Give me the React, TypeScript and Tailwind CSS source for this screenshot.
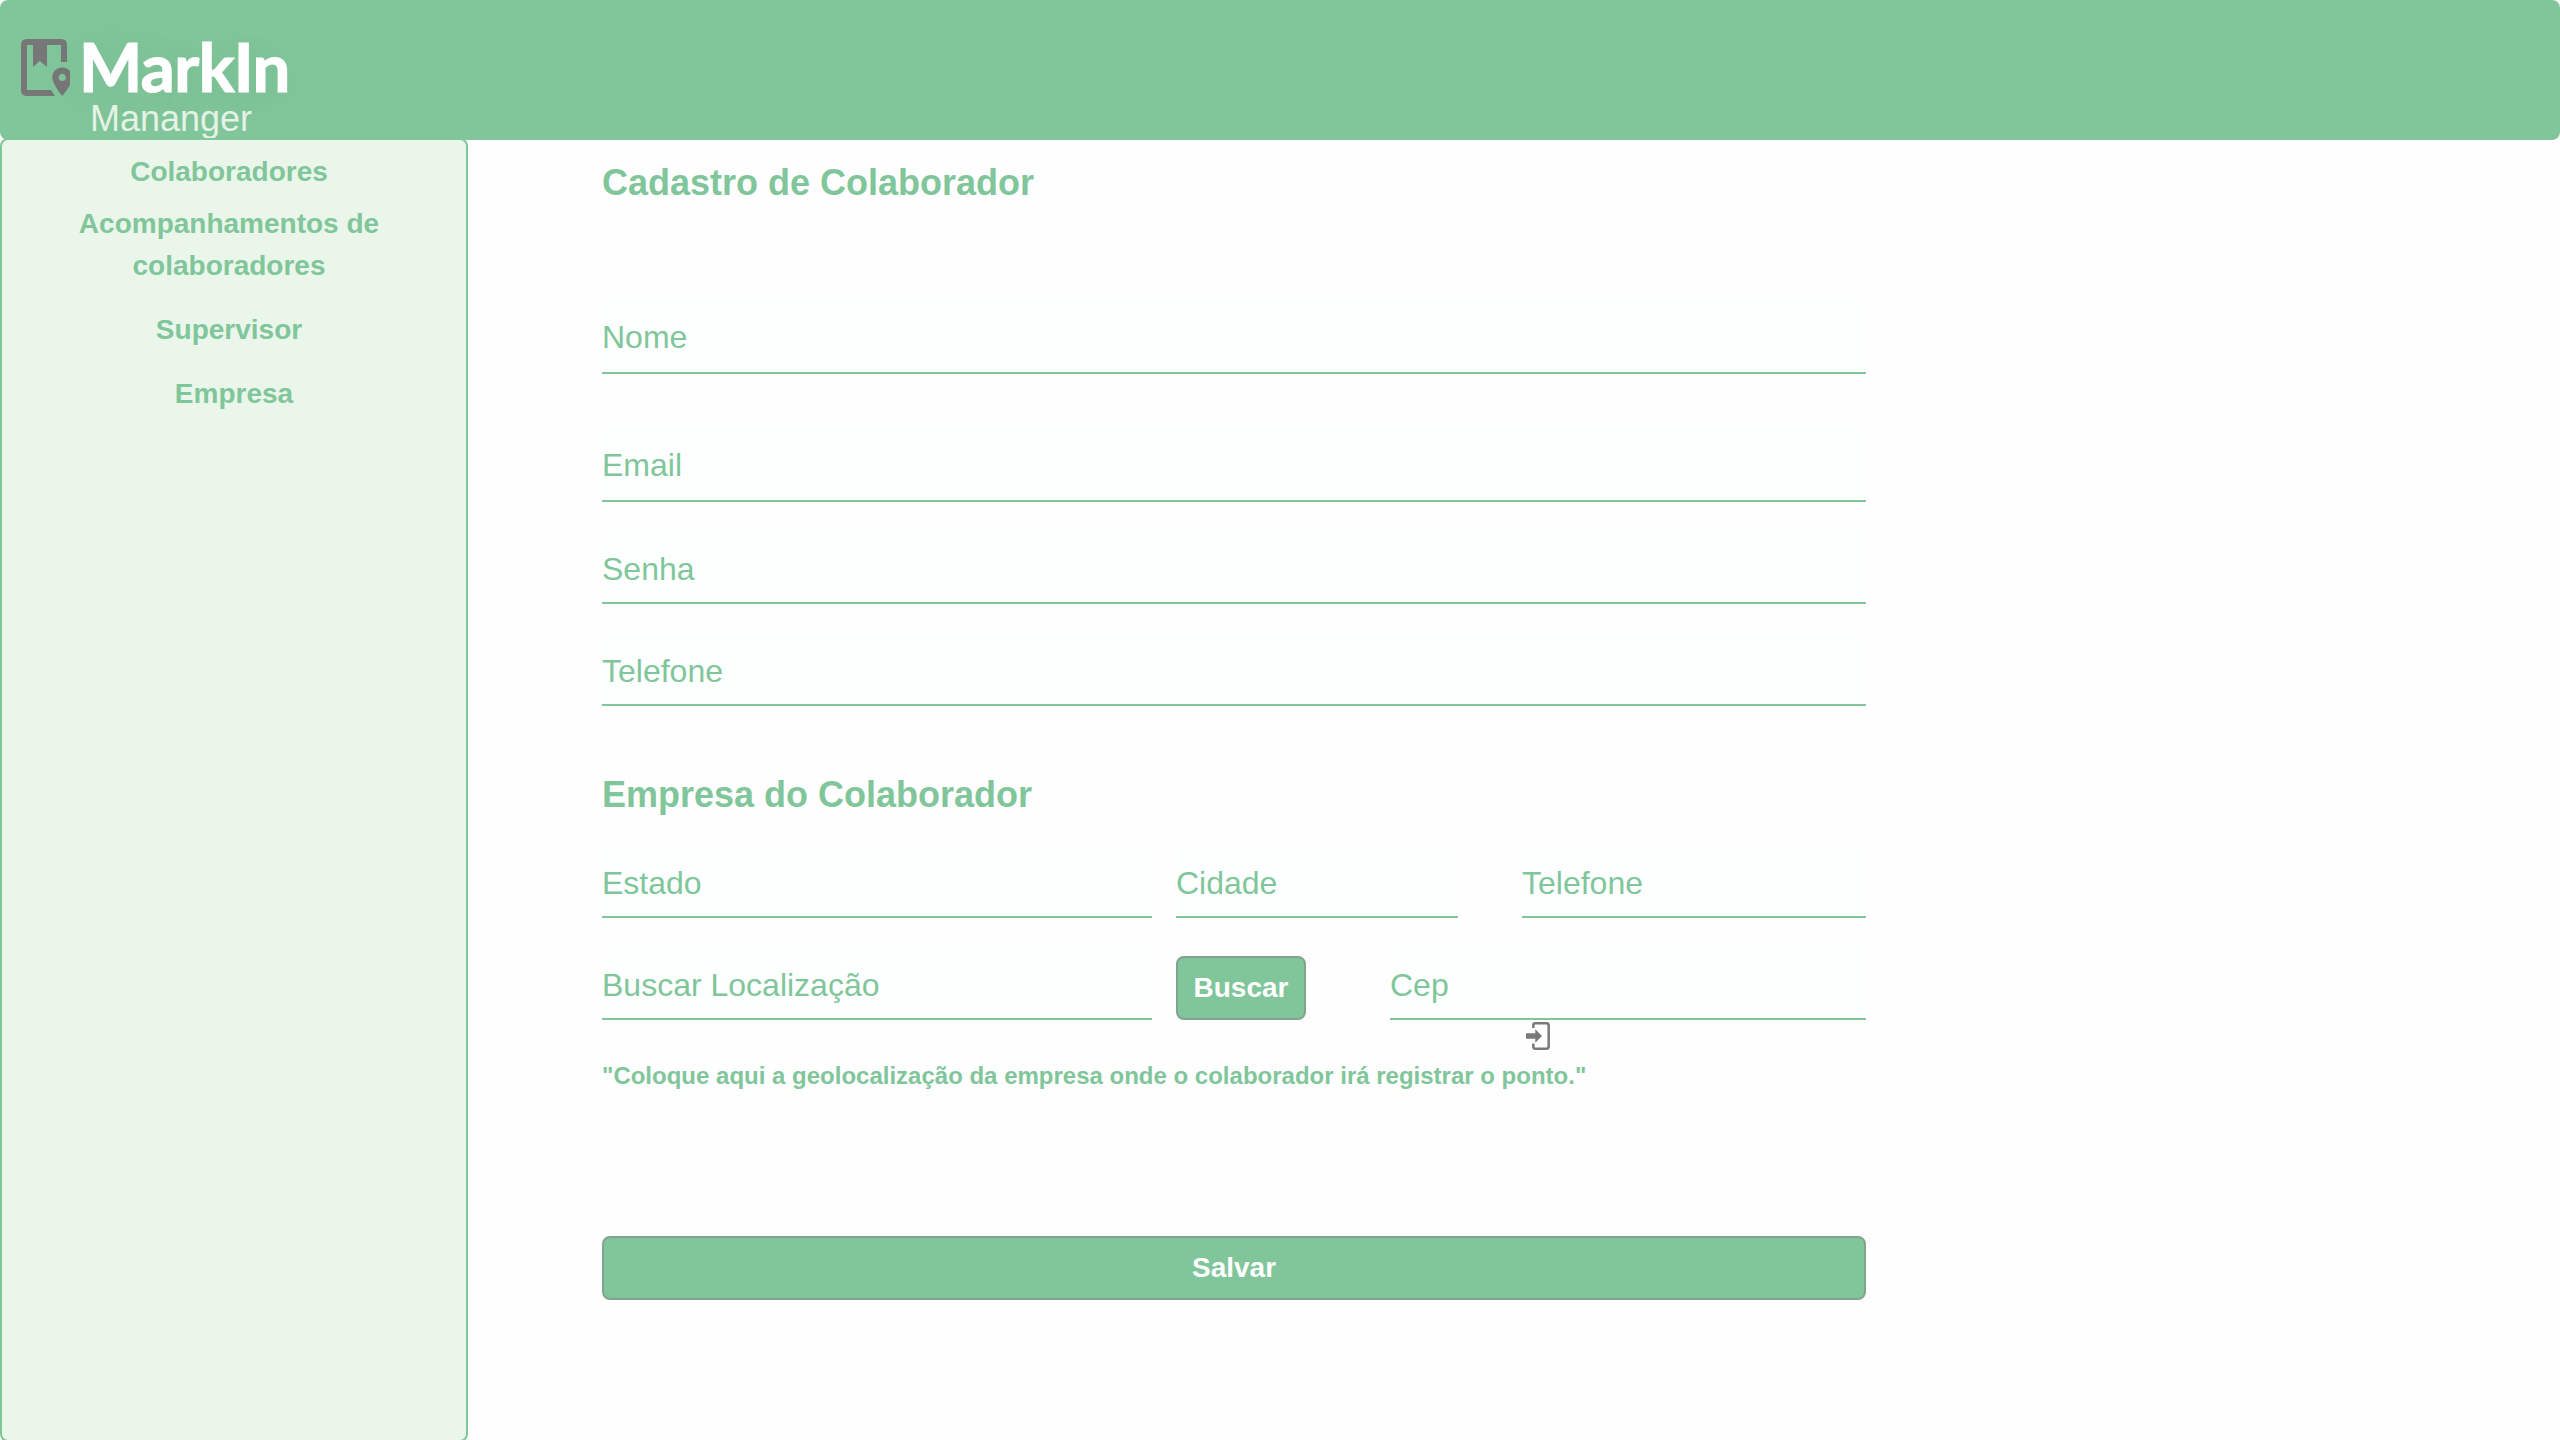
import React from "react";

type FieldProps = { label: string; type?: string; className: string };

function Field({ label, type = "text", className }: FieldProps) {
  return (
    <input
      type={type}
      placeholder={label}
      aria-label={label}
      className={`block shrink-0 rounded-none border-0 border-b-2 border-[#80c69a] bg-[#fdfffe] p-0 text-[32px] text-[#80c69a] outline-none placeholder:text-[#80c69a] placeholder:opacity-100 ${className}`}
    />
  );
}

function LogoIcon() {
  return (
    <svg width="49" height="57" viewBox="21 39 49 57" fill="#777777" className="block shrink-0">
      <path d="M27 39H61Q67 39 67 45V62H61V45H47V67L39.7 61L33 67V45H27V90H51L55 96H27Q21 96 21 90V45Q21 39 27 39Z" />
      <path
        fillRule="evenodd"
        d="M62.3 67.5C57 67.5 52.3 71.6 52.3 77.3C52.3 84.5 62.3 96 62.3 96S72.3 84.5 72.3 77.3C72.3 71.6 67.6 67.5 62.3 67.5ZM62.3 74A3.5 3.5 0 1 1 62.3 81A3.5 3.5 0 1 1 62.3 74Z"
      />
    </svg>
  );
}

function EnterIcon() {
  return (
    <svg width="24" height="28" viewBox="0 0 24 28" className="block">
      <path d="M7.3 6V3.5Q7.3 1.3 9.5 1.3H20.5Q22.7 1.3 22.7 3.5V24.5Q22.7 26.7 20.5 26.7H9.5Q7.3 26.7 7.3 24.5V21.5" fill="none" stroke="#797979" strokeWidth="2.5" />
      <path d="M0 11.3H9.3V7.3L16 14L9.3 20.7V16.7H0Z" fill="#797979" />
    </svg>
  );
}

export default function App() {
  return (
    <div className="flex h-[1440px] w-[2560px] flex-col overflow-hidden bg-[#fefefe] font-['Liberation_Sans',Arial,sans-serif] text-[#80c69a]">
      <header className="h-[140px] shrink-0 rounded-lg bg-[#80c69a] pt-[39px] pl-[21px]">
        <div className="flex">
          <LogoIcon />
          <div className="ml-[9px] h-[57px] font-['Lato',sans-serif] text-[67px] leading-[54px] font-bold tracking-[-0.6px] text-white [-webkit-text-stroke:1.2px_white] [text-shadow:0_8px_64px_rgba(0,0,0,0.1)]">
            MarkIn
          </div>
        </div>
        <div className="ml-[69px] pt-px text-[36px] leading-[44px] text-[#e5f2e5]">Mananger</div>
      </header>

      <div className="flex">
        <aside className="-mt-0.5 h-[1304px] w-[468px] shrink-0 rounded-lg border-2 border-[#80c69a] bg-[#ebf6eb] pt-[11px]">
          <nav className="flex flex-col text-center text-[28px] leading-[42px] font-bold">
            <a className="mr-[10px]">Colaboradores</a>
            <a className="mt-[10px] mr-[10px]">
              Acompanhamentos de
              <br />
              colaboradores
            </a>
            <a className="mt-[22px] mr-[10px]">Supervisor</a>
            <a className="mt-[22px]">Empresa</a>
          </nav>
        </aside>

        <main className="ml-[134px] flex w-[1264px] flex-col pt-[16px]">
          <h1 className="text-[36px] leading-[54px] font-bold">Cadastro de Colaborador</h1>
          <Field label="Nome" className="mt-[88px] h-[76px] w-full pt-1" />
          <Field label="Email" className="mt-[52px] h-[76px] w-full pt-1" />
          <Field label="Senha" type="password" className="mt-[28px] h-[74px] w-full pt-1.5" />
          <Field label="Telefone" type="tel" className="mt-[28px] h-[74px] w-full pt-1.5" />

          <h2 className="mt-[62px] text-[36px] leading-[54px] font-bold">Empresa do Colaborador</h2>
          <div className="mt-[22px] flex">
            <Field label="Estado" className="h-[74px] w-[550px] pt-1.5" />
            <Field label="Cidade" className="ml-6 h-[74px] w-[282px] pt-1.5" />
            <Field label="Telefone" type="tel" className="ml-16 h-[74px] w-[344px] pt-1.5" />
          </div>
          <div className="mt-[28px] flex items-end">
            <Field label="Buscar Localização" className="h-[74px] w-[550px] pt-1.5" />
            <button className="ml-6 h-16 w-[130px] rounded-lg border-2 border-[#83a391] bg-[#80c69a] text-[28px] font-bold text-white">
              Buscar
            </button>
            <Field label="Cep" className="ml-[84px] h-[74px] w-[476px] pt-1.5" />
          </div>
          <div className="h-[38px] pt-0.5 pl-[924px]">
            <EnterIcon />
          </div>
          <p className="text-[24px] leading-[36px] font-bold">
            "Coloque aqui a geolocalização da empresa onde o colaborador irá registrar o ponto."
          </p>
          <button className="mt-[142px] h-16 w-full rounded-lg border-2 border-[#83a391] bg-[#80c69a] text-[28px] font-bold text-white">
            Salvar
          </button>
        </main>
      </div>
    </div>
  );
}
